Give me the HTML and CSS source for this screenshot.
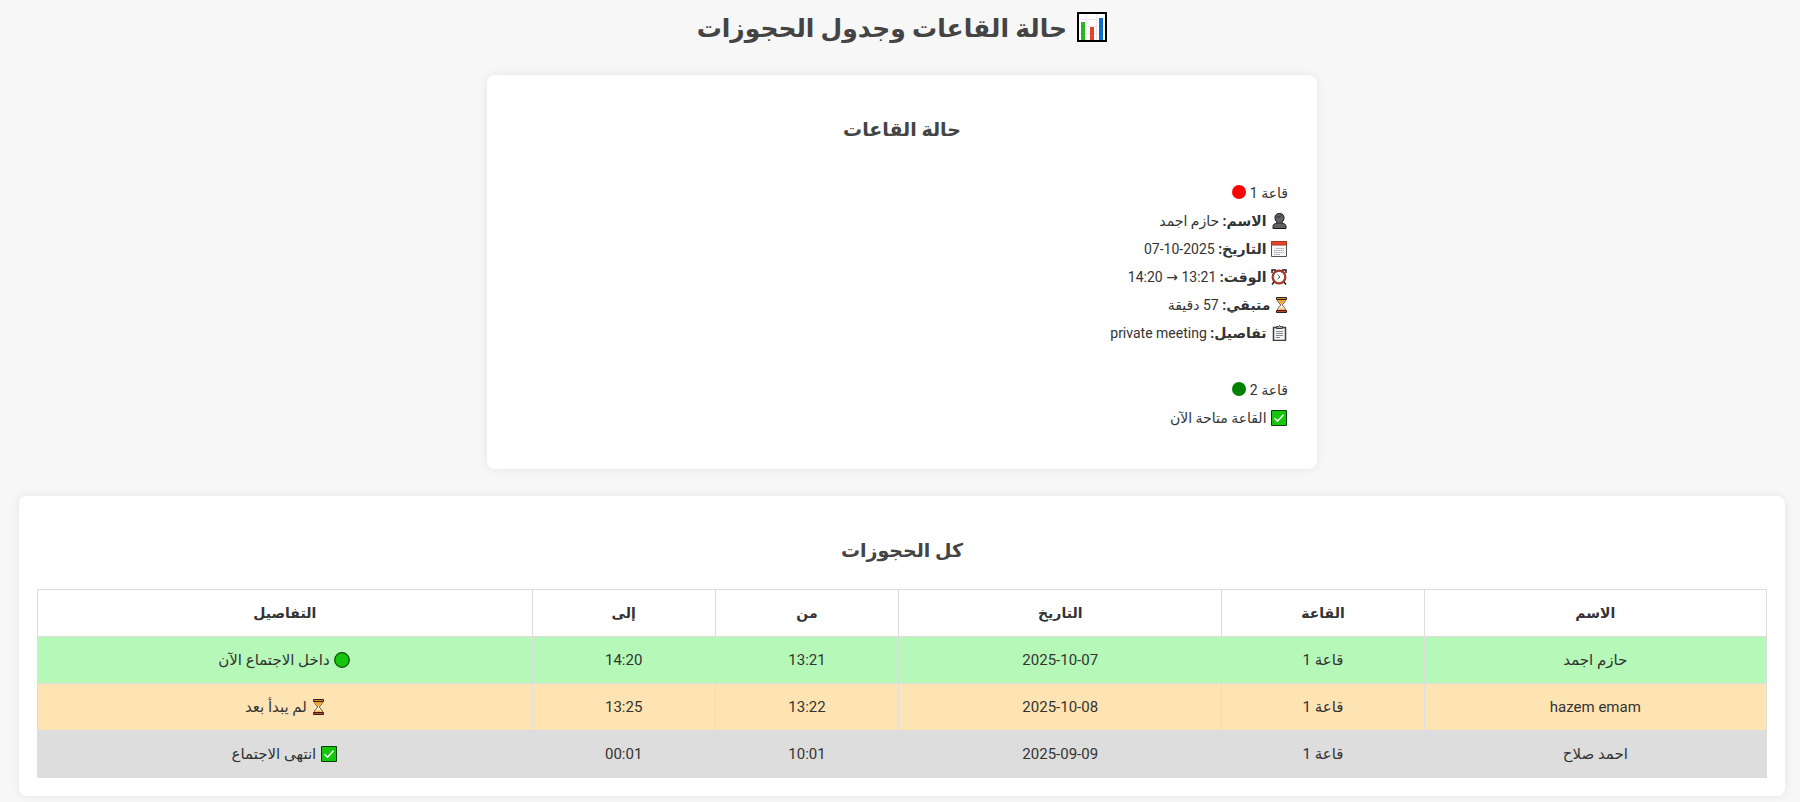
FILE: index.html
```html
<!DOCTYPE html>
<html lang="ar" dir="rtl">
<head>
  <meta charset="UTF-8">
  <meta name="viewport" content="width=device-width, initial-scale=1.0">
  <title>حالة القاعات وجدول الحجوزات</title>
  <link rel="stylesheet" href="styles.css">
</head>
<body>
  <svg class="sprite" aria-hidden="true">
    <symbol id="i-hourglass" viewBox="0 0 11 16">
      <path d="M1.5 2c0 4 3 4.500 3 6s-3 2-3 6h8c0-4-3-4.500-3-6s3-2 3-6z" fill="#fff3dc" stroke="#4a3020"/>
      <path d="M2.200 3h6.600c-.3 2-1.800 3-3.300 4.500C4 6 2.500 5 2.200 3z" fill="#f5a42a"/>
      <path d="M2.500 13c1-1 2-1.500 3-2 1 .5 2 1 3 2z" fill="#f5b44a"/>
      <path d="M.5.5h10v2H.5z" fill="#e08a2a" stroke="#30201c"/>
      <path d="M.5 13.500h10v2H.5z" fill="#d8402a" stroke="#30201c"/>
    </symbol>
    <symbol id="i-check" viewBox="0 0 16 16">
      <path d="M.5.5h15v15H.5z" fill="#16c60c" stroke="#063f08"/>
      <path d="M3.500 8.200l3 3 6-6.500" fill="none" stroke="#fff" stroke-width="1.500"/>
    </symbol>
  </svg>

  <h1>
    <svg class="icon-title" viewBox="0 0 30 30" aria-hidden="true">
      <path d="M1 1h28v28H1z" fill="#fff" stroke="#000" stroke-width="2"/>
      <path d="M2 7.500h26M2 14.500h26M2 21.500h26M9.500 2v26M19.500 2v26" stroke="#f0e4f2"/>
      <path d="M4 10h4v18H4z" fill="#2bb51f"/>
      <path d="M13 15h4v13h-4z" fill="#e0442a"/>
      <path d="M22 6h4v22h-4z" fill="#0f6fc8"/>
    </svg>
    حالة القاعات وجدول الحجوزات
  </h1>

  <div class="card rooms">
    <h2>حالة القاعات</h2>
    <div class="room">
      <div>قاعة 1 <span class="dot busy"></span></div>
      <div>
        <svg class="icon" viewBox="0 0 16 16" aria-hidden="true">
          <path d="M2 15.500v-2c0-2 1.500-3 4-3.300V9C4.500 8 4 6.500 4 4.500 4 2 5.700.5 8.500.5S13 2 13 4.500C13 6.500 12.500 8 11 9v1.200c2.500.3 4 1.300 4 3.300v2z" fill="#626262" stroke="#161616"/>
          <path d="M6 9.500c1.500 1 3.500 1 5 0M5.500 4c2 .5 4-.3 5-1.500" fill="none" stroke="#2b2b2b"/>
        </svg>
        <strong>الاسم:</strong> حازم اجمد
      </div>
      <div>
        <svg class="icon" viewBox="0 0 16 16" aria-hidden="true">
          <path d="M.5.5h15v15H.5z" fill="#f7f7f7" stroke="#55504e"/>
          <path d="M.5.5h15v3.500H.5z" fill="#e5482f" stroke="#a8321f"/>
          <path d="M5 7.500h8M3 9.500h10M3 11.500h10M3 13.500h6" stroke="#a5a5a5" stroke-dasharray="1.500 .7"/>
        </svg>
        <strong>التاريخ:</strong> 2025-10-07
      </div>
      <div>
        <svg class="icon" viewBox="0 0 16 16" aria-hidden="true">
          <path d="M1 4V1h4M15 4V1h-4M3 13l-2 2.500M13 13l2 2.500" fill="none" stroke="#2b1b1b" stroke-width="1.500"/>
          <circle cx="8" cy="8" r="6.300" fill="#fff" stroke="#722019" stroke-width="2.200"/>
          <circle cx="8" cy="8" r="6.200" fill="none" stroke="#e5533d"/>
          <path d="M6.500 5.500L9 8l-2.500 2" fill="none" stroke="#555"/>
        </svg>
        <strong>الوقت:</strong> 13:21 → 14:20
      </div>
      <div>
        <svg class="icon narrow" aria-hidden="true"><use href="#i-hourglass"/></svg>
        <strong>متبقي:</strong> 57 دقيقة
      </div>
      <div>
        <svg class="icon" viewBox="0 0 16 16" aria-hidden="true">
          <path d="M2.500 2.500h12v13h-12z" fill="#f4f4f4" stroke="#38413f" stroke-width="1.500"/>
          <path d="M5.500 3.500v-2h2l1-1 1 1h2v2z" fill="#aaa" stroke="#38413f"/>
          <path d="M5 6.500h7M5 8.500h7M5 10.500h7M5 12.500h4" stroke="#868d8b"/>
        </svg>
        <strong>تفاصيل:</strong> private meeting
      </div>
    </div>
    <div class="room">
      <div>قاعة 2 <span class="dot free"></span></div>
      <div>
        <svg class="icon" aria-hidden="true"><use href="#i-check"/></svg>
        القاعة متاحة الآن
      </div>
    </div>
  </div>

  <div class="card bookings">
    <h2>كل الحجوزات</h2>
    <table>
      <colgroup>
        <col class="c-name"><col class="c-room"><col class="c-date"><col class="c-time"><col class="c-time"><col>
      </colgroup>
      <thead>
        <tr><th>الاسم</th><th>القاعة</th><th>التاريخ</th><th>من</th><th>إلى</th><th>التفاصيل</th></tr>
      </thead>
      <tbody>
        <tr class="now">
          <td>حازم اجمد</td><td>قاعة 1</td><td>2025-10-07</td><td>13:21</td><td>14:20</td>
          <td>
            <svg class="icon" viewBox="0 0 16 16" aria-hidden="true"><circle cx="8" cy="8" r="7.300" fill="#16c60c" stroke="#0b4a0b" stroke-width="1.200"/></svg>
            داخل الاجتماع الآن
          </td>
        </tr>
        <tr class="upcoming">
          <td>hazem emam</td><td>قاعة 1</td><td>2025-10-08</td><td>13:22</td><td>13:25</td>
          <td>
            <svg class="icon narrow" aria-hidden="true"><use href="#i-hourglass"/></svg>
            لم يبدأ بعد
          </td>
        </tr>
        <tr class="ended">
          <td>احمد صلاح</td><td>قاعة 1</td><td>2025-09-09</td><td>10:01</td><td>00:01</td>
          <td>
            <svg class="icon" aria-hidden="true"><use href="#i-check"/></svg>
            انتهى الاجتماع
          </td>
        </tr>
      </tbody>
    </table>
  </div>
</body>
</html>
```
FILE: styles.css
```css
body { font-family: Roboto, "DejaVu Sans", sans-serif; font-size: 14px; line-height: 28px; background-color: #f7f7f7; color: #333; margin: 0; padding: 0 15px 7px 19px; }
.sprite { display: none; }
h1, h2 { color: #444; text-align: center; margin: 0; }
h1 { font-size: 25px; line-height: 58px; margin-bottom: 17px; }
h2 { font-size: 19px; line-height: 38px; }
.icon-title { width: 30px; height: 30px; vertical-align: -5px; margin-left: 4px; }
.icon { width: 16px; height: 16px; vertical-align: -3px; margin: 0 1px; }
.icon.narrow { width: 11px; margin-left: 2px; }
.card { background-color: #fff; border-radius: 8px; box-shadow: 0 0 10px rgba(0,0,0,0.08); box-sizing: border-box; }
.rooms { max-width: 830px; margin: 0 auto 27px; padding: 36px 29px 8px; }
.rooms h2 { margin-bottom: 30px; }
.room { margin-bottom: 29px; }
.dot { display: inline-block; width: 14px; height: 14px; border-radius: 50%; vertical-align: -1px; }
.busy { background-color: #f00; }
.free { background-color: #008000; }
.bookings { padding: 36px 18px 18px; }
.bookings h2 { margin-bottom: 19px; }
table { width: 100%; table-layout: fixed; border-collapse: collapse; }
th, td { border: 1px solid #ddd; padding: 9px 8px; text-align: center; }
th { font-size: 14px; }
td { font-size: 15px; }
.c-name { width: 19.8%; }
.c-room { width: 11.7%; }
.c-date { width: 18.7%; }
.c-time { width: 10.6%; }
.now { background-color: #b6f8b8; }
.upcoming { background-color: #ffe4b3; }
.ended { background-color: #ddd; }
```
